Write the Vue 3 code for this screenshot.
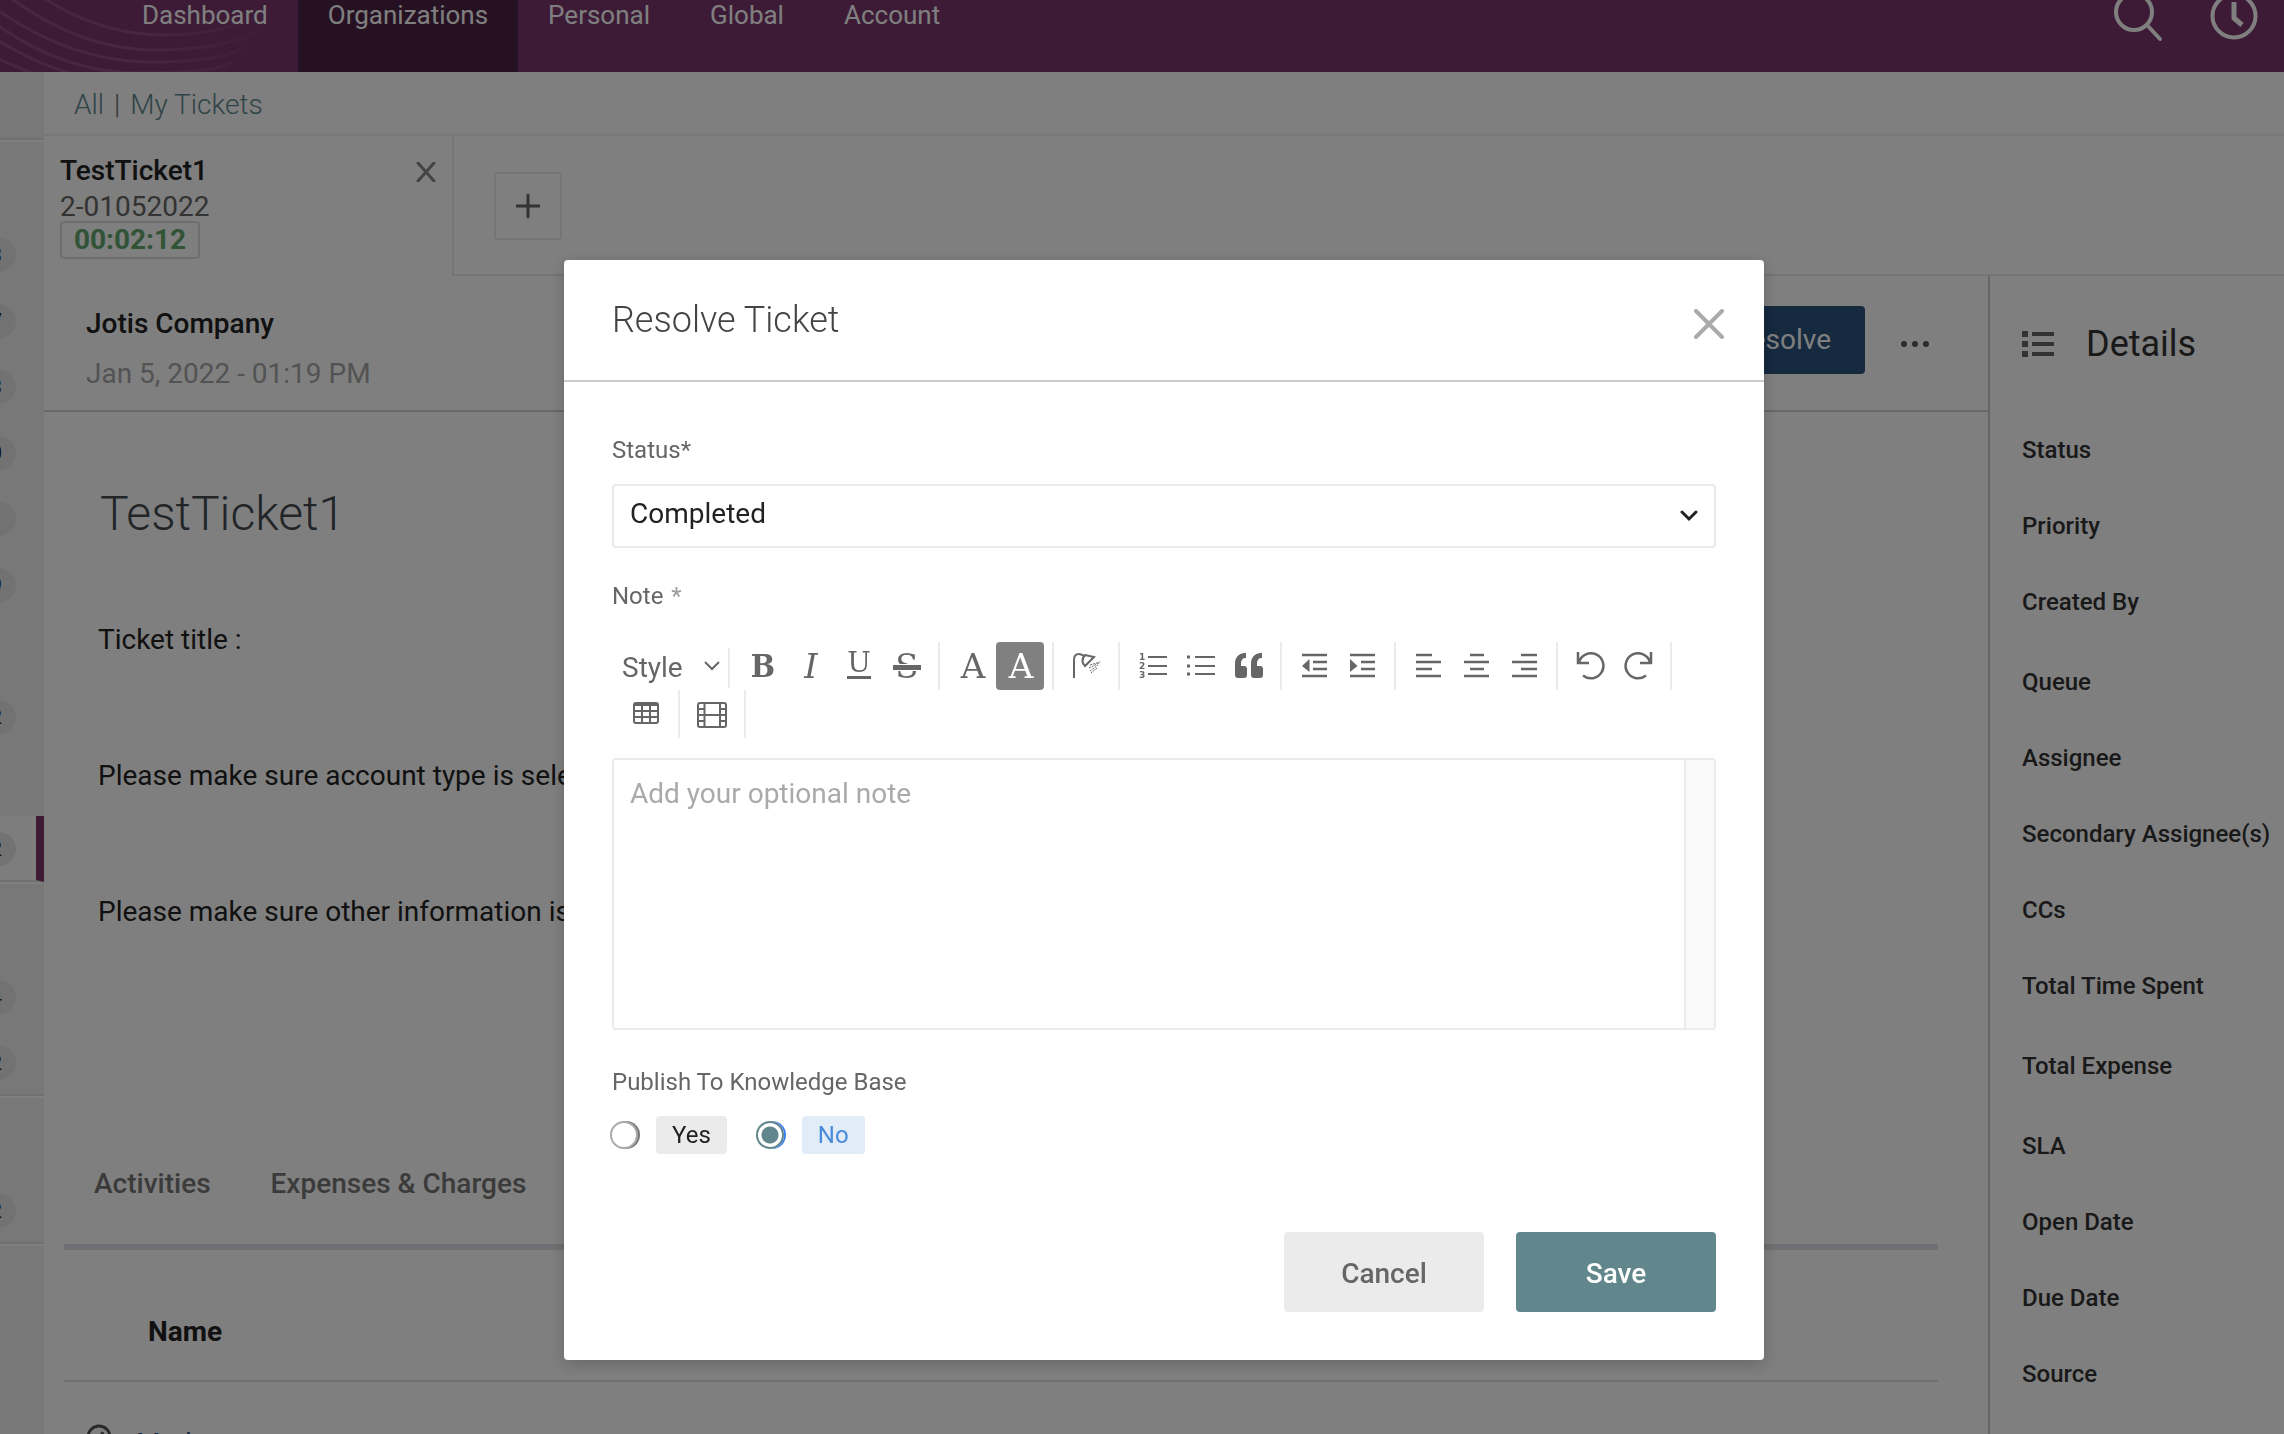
<script setup>
import { ref } from 'vue'

const navItems = ['Dashboard', 'Organizations', 'Personal', 'Global', 'Account']
const activeNav = 'Organizations'

// Queue counters of the collapsed side panel; null is a row without a counter.
const sideSections = [
  [13, 17, 13, 10, 1, 19, null, 12, null, 12],
  [14, 12],
  [12]
]
const activeSide = [0, 9]

const paragraphs = [
  'Ticket title :',
  'Please make sure account type is selected',
  'Please make sure other information is correct'
]

const details = [
  ['Status', 'Priority', 'Created By'],
  ['Queue', 'Assignee', 'Secondary Assignee(s)', 'CCs', 'Total Time Spent'],
  ['Total Expense'],
  ['SLA', 'Open Date', 'Due Date', 'Source']
]

const toolGroups = [
  [
    { label: 'Bold', text: 'B', kind: 'bold' },
    { label: 'Italic', text: 'I', kind: 'italic' },
    { label: 'Underline', text: 'U', kind: 'underline' },
    { label: 'Strikethrough', text: 'S', kind: 'strike' }
  ],
  [
    { label: 'Text colour', text: 'A', kind: 'plain' },
    { label: 'Background colour', text: 'A', kind: 'plain filled' }
  ],
  [{ label: 'Clear formatting', icon: 'clear' }],
  [
    { label: 'Numbered list', icon: 'ol' },
    { label: 'Bulleted list', icon: 'ul' },
    { label: 'Quote', icon: 'quote' }
  ],
  [
    { label: 'Outdent', icon: 'outdent' },
    { label: 'Indent', icon: 'indent' }
  ],
  [
    { label: 'Align left', icon: 'left' },
    { label: 'Align centre', icon: 'center' },
    { label: 'Align right', icon: 'right' }
  ],
  [
    { label: 'Undo', icon: 'undo' },
    { label: 'Redo', icon: 'redo' }
  ],
  [{ label: 'Insert table', icon: 'table' }],
  [{ label: 'Insert video', icon: 'film' }]
]

const icons = {
  clear: {
    width: 2,
    stroke: 'M12 36V18q0-6 5-6q3 0 6 3M23 13l9 2l-9 9q-5-5 0-11z',
    dots: 'M28 23l10-3M27 26l10-5M28 29l8-6M29 31l6-5'
  },
  ol: { width: 2, stroke: 'M20 15h19M20 24h19M20 32h19' },
  ul: { width: 2, stroke: 'M19 15h20M19 24h20M19 32h20', fill: 'M11 13.500h3v3h-3zM11 22.500h3v3h-3zM11 30.500h3v3h-3z' },
  quote: {
    fill: 'M20 24h-3v-3c0-3 2-5 4-5h1v-5h-1c-6 0-10 4-10 11v11c0 2 1 3 3 3h6c2 0 3-1 3-3v-6c0-2-1-3-3-3zM36 24h-3v-3c0-3 2-5 4-5h1v-5h-1c-6 0-10 4-10 11v11c0 2 1 3 3 3h6c2 0 3-1 3-3v-6c0-2-1-3-3-3z'
  },
  outdent: { width: 2.5, stroke: 'M12 13h25M23 20h14M23 27h14M12 34h25', fill: 'M19.500 17v13L12 24z' },
  indent: { width: 2.5, stroke: 'M12 13h25M23 20h14M23 27h14M12 34h25', fill: 'M12 17v13L19.500 24z' },
  left: { width: 2.5, stroke: 'M12 13h16M12 20h25M12 27h16M12 34h25' },
  center: { width: 2.5, stroke: 'M18 13h14M12 20h25M18 27h14M12 34h25' },
  right: { width: 2.5, stroke: 'M21 13h16M12 20h25M21 27h16M12 34h25' },
  undo: { width: 2.5, stroke: 'M12 10v11h11M13 20A12.500 12.500 0 1 1 17 33.500' },
  redo: { width: 2.5, stroke: 'M37 10v11H26M36 20A12.500 12.500 0 1 0 32 33.500' },
  table: {
    width: 2,
    stroke: 'M14 13h20q2 0 2 2v16q0 2-2 2H14q-2 0-2-2V15q0-2 2-2zM12 21h24M12 27h24M20 15v18M28 15v18',
    fill: 'M12 13h24v3H12z'
  },
  film: {
    width: 2,
    stroke: 'M12 13h24q2 0 2 2v20q0 2-2 2H12q-2 0-2-2V15q0-2 2-2zM16.500 13v24M32 13v24M16 25h16M10 19h6M10 25h6M10 31h6M32 19h6M32 25h6M32 31h6'
  }
}

const status = ref('Completed')
const textStyle = ref('Style')
const note = ref('')
const publish = ref('No')
</script>

<template>
  <div class="page">
    <header class="topbar">
      <svg class="waves" viewBox="0 0 280 72" aria-hidden="true">
        <defs>
          <linearGradient id="wave-fade" gradientUnits="userSpaceOnUse" x1="0" y1="0" x2="280" y2="0">
            <stop offset="0" stop-color="#fff" stop-opacity=".12" />
            <stop offset=".5" stop-color="#fff" stop-opacity=".12" />
            <stop offset="1" stop-color="#fff" stop-opacity="0" />
          </linearGradient>
        </defs>
        <g fill="none" stroke="url(#wave-fade)" stroke-width="3">
          <path d="M44 -2Q100 35 165 35T276 6" />
          <path d="M8 -4Q80 50 155 50T262 28" />
          <path d="M-4 9Q72 62 150 62T244 46" />
          <path d="M-4 24Q64 73 140 73T232 62" />
          <path d="M-4 39Q48 72 100 80" />
          <path d="M-4 57Q20 70 44 76" />
        </g>
      </svg>
      <nav class="nav">
        <a v-for="item in navItems" :key="item" href="#" :class="{ active: item === activeNav }">{{ item }}</a>
      </nav>
      <div class="top-actions">
        <button type="button" aria-label="Search">
          <svg width="52" height="52" viewBox="0 0 52 52" fill="none" stroke="#fff" stroke-width="4">
            <circle cx="22" cy="22" r="18" /><path d="M35 35l13 14" stroke-linecap="round" />
          </svg>
        </button>
        <button type="button" aria-label="Timer">
          <svg width="52" height="52" viewBox="0 0 52 52" fill="none" stroke="#fff">
            <circle cx="26" cy="26" r="21.500" stroke-width="4" /><path d="M26 12v16l8 7" stroke-width="5" />
          </svg>
        </button>
      </div>
    </header>

    <div class="shell">
      <aside class="side">
        <div class="side-top"></div>
        <ul v-for="(section, s) in sideSections" :key="s">
          <li v-for="(count, i) in section" :key="i" :class="{ current: s === activeSide[0] && i === activeSide[1] }">
            <span v-if="count !== null" class="badge" :class="{ single: count < 10 }">{{ count }}</span>
          </li>
        </ul>
      </aside>

      <div class="workspace">
        <div class="crumbs">
          <a href="#">All</a><span>|</span><a href="#">My Tickets</a>
        </div>

        <div class="tab-strip">
          <div class="ticket-tab">
            <div>
              <strong>TestTicket1</strong>
              <span class="number">2-01052022</span>
              <span class="timer">00:02:12</span>
            </div>
            <button type="button" class="tab-close" aria-label="Close tab">
              <svg width="20" height="20" viewBox="0 0 20 20" fill="none" stroke="#888" stroke-width="3" stroke-linecap="round"><path d="M2 1l16 18M18 1L2 19" /></svg>
            </button>
          </div>
          <div class="strip-rest">
            <button type="button" class="tab-add" aria-label="New tab">
              <svg width="24" height="24" viewBox="0 0 24 24" stroke="#666" stroke-width="3"><path d="M12 0v24M0 12h24" /></svg>
            </button>
          </div>
        </div>

        <div class="columns">
          <main class="ticket">
            <div class="ticket-head">
              <div>
                <strong>Jotis Company</strong>
                <time>Jan 5, 2022 - 01:19 PM</time>
              </div>
              <div class="ticket-actions">
                <button type="button" class="resolve">Resolve</button>
                <button type="button" class="more" aria-label="More">
                  <svg width="30" height="8" viewBox="0 0 30 8" fill="#555b60"><circle cx="4" cy="4" r="3" /><circle cx="15" cy="4" r="3" /><circle cx="26" cy="4" r="3" /></svg>
                </button>
              </div>
            </div>

            <div class="ticket-body">
              <h1>TestTicket1</h1>
              <p v-for="p in paragraphs" :key="p">{{ p }}</p>
            </div>

            <div class="ticket-lists">
              <div class="list-tabs">
                <a href="#">Activities</a><a href="#">Expenses &amp; Charges</a>
              </div>
              <table>
                <thead><tr><th>Name</th></tr></thead>
                <tbody>
                  <tr>
                    <td>
                      <svg width="26" height="26" viewBox="0 0 26 26" fill="none" stroke="#555" stroke-width="3"><circle cx="13" cy="13" r="11" /><path d="M13 16l4-8" /></svg>
                      <a href="#">Mark</a>
                    </td>
                  </tr>
                </tbody>
              </table>
            </div>
          </main>

          <aside class="details">
            <h2>
              <svg width="32" height="26" viewBox="0 0 32 26" fill="#666"><path d="M0 0h6v6H0zM0 10h6v6H0zM0 20h6v6H0zM10 1h22v4H10zM10 11h22v4H10zM10 21h22v4H10z" /></svg>
              Details
            </h2>
            <ul v-for="(group, g) in details" :key="g">
              <li v-for="field in group" :key="field">{{ field }}</li>
            </ul>
          </aside>
        </div>
      </div>
    </div>

    <div class="overlay">
      <form class="modal" role="dialog" aria-labelledby="dialog-title" @submit.prevent>
        <div class="modal-head">
          <h2 id="dialog-title">Resolve Ticket</h2>
          <button type="button" aria-label="Close">
            <svg width="30" height="30" viewBox="0 0 30 30" fill="none" stroke="#aaa" stroke-width="4" stroke-linecap="round"><path d="M2 2l26 26M28 2L2 28" /></svg>
          </button>
        </div>

        <div class="modal-body">
          <label class="field-label" for="status">Status*</label>
          <div class="select-wrap status-wrap">
            <select id="status" v-model="status"><option>Completed</option></select>
            <svg width="18" height="12" viewBox="0 0 18 12" fill="none" stroke="#222" stroke-width="3" stroke-linecap="round"><path d="M2 2l7 7l7-7" /></svg>
          </div>

          <label class="field-label note-label" for="note">Note <span>*</span></label>
          <div class="toolbar">
            <div class="select-wrap style-wrap">
              <select v-model="textStyle" aria-label="Style"><option>Style</option></select>
              <svg width="16" height="10" viewBox="0 0 16 10" fill="none" stroke="#666" stroke-width="2"><path d="M1 1l7 7l7-7" /></svg>
            </div>
            <div v-for="(group, g) in toolGroups" :key="g" class="tool-group">
              <button v-for="tool in group" :key="tool.label" type="button" :aria-label="tool.label" :class="['tool', tool.kind]">
                <span v-if="tool.text">{{ tool.text }}</span>
                <svg v-else width="48" height="48" viewBox="0 0 48 48" fill="none">
                  <path v-if="icons[tool.icon].fill" :d="icons[tool.icon].fill" fill="#666" />
                  <path v-if="icons[tool.icon].stroke" :d="icons[tool.icon].stroke" stroke="#666" :stroke-width="icons[tool.icon].width" />
                  <path v-if="icons[tool.icon].dots" :d="icons[tool.icon].dots" stroke="#666" stroke-width="1" stroke-dasharray="2 1" />
                  <g v-if="tool.icon === 'ol'" class="ol-digits"><text x="11" y="18">1</text><text x="11" y="27">2</text><text x="11" y="36">3</text></g>
                </svg>
              </button>
            </div>
          </div>
          <div class="editor">
            <textarea id="note" v-model="note" placeholder="Add your optional note"></textarea>
            <div class="gutter"></div>
          </div>

          <fieldset>
            <legend class="field-label">Publish To Knowledge Base</legend>
            <div class="choices">
              <label v-for="choice in ['Yes', 'No']" :key="choice">
                <input v-model="publish" type="radio" name="publish" :value="choice" />
                <span>{{ choice }}</span>
              </label>
            </div>
          </fieldset>

          <div class="modal-actions">
            <button type="button" class="cancel">Cancel</button>
            <button type="submit" class="save">Save</button>
          </div>
        </div>
      </form>
    </div>
  </div>
</template>

<style>
body { background: #fff; }
</style>

<style scoped>
.page, .page * { box-sizing: border-box; }
.page {
  display: flex;
  flex-direction: column;
  height: 100vh;
  overflow: hidden;
  background: #fff;
  color: #222;
  font: 400 28px/40px Roboto, "Liberation Sans", sans-serif;
}
button, select, textarea { font: inherit; color: inherit; margin: 0; padding: 0; border: 0; background: none; }
svg { display: block; }
a { text-decoration: none; }
ul { margin: 0; padding: 0; list-style: none; }
h1, h2, p { margin: 0; }
strong { font-weight: 500; }

.topbar {
  position: relative;
  display: flex;
  flex: none;
  align-items: flex-end;
  justify-content: space-between;
  height: 72px;
  padding: 0 24px 0 112px;
  overflow: hidden;
  background: #7a366e;
}
.waves { position: absolute; left: 0; top: 0; width: 280px; height: 72px; }
.nav { position: relative; display: flex; font-size: 26px; line-height: 114px; }
.nav a { padding: 0 30px; color: #fff; }
.nav a.active { background: #4c2246; }
.top-actions { display: flex; gap: 44px; padding-bottom: 30px; }

.shell { display: flex; flex: 1; min-height: 0; }
.side { flex: none; width: 44px; overflow: hidden; background: #f0f0f0; font-size: 20px; }
.side-top { height: 70px; border-bottom: 2px solid #fff; box-shadow: inset 0 -2px #e0e0e0; }
.side ul { padding-top: 80px; border-bottom: 2px solid #fff; }
.side li { display: flex; justify-content: flex-end; align-items: center; height: 66px; padding-right: 28px; }
.side li:last-child { padding-top: 2px; border-bottom: 2px solid #e0e0e0; }
.side li.current { padding-right: 20px; border-right: 8px solid #7a366e; background: #fafafa; }
.badge {
  flex: none;
  width: 52px;
  height: 34px;
  padding-right: 14px;
  border-radius: 17px;
  background: #e4e4e4;
  line-height: 34px;
  text-align: right;
}
.badge.single { padding-right: 20px; }

.workspace { display: flex; flex: 1; flex-direction: column; min-width: 0; }
.crumbs {
  display: flex;
  gap: 10px;
  height: 64px;
  padding-left: 30px;
  border-bottom: 2px solid #f2f2f2;
  color: #666;
  font-weight: 300;
  line-height: 66px;
}
.crumbs a { color: #60888e; }

.tab-strip { display: flex; height: 140px; }
.ticket-tab {
  display: flex;
  justify-content: space-between;
  width: 410px;
  padding: 17px 16px 0;
  border-right: 2px solid #ebebeb;
  line-height: 36px;
}
.ticket-tab strong, .number { display: block; }
.number { color: #666; }
.timer {
  display: block;
  width: 140px;
  margin-top: -4px;
  border: 2px solid #ddd;
  border-radius: 4px;
  color: #62a76c;
  font-weight: 700;
  line-height: 34px;
  text-align: center;
}
.tab-close { align-self: flex-start; padding-top: 9px; }
.strip-rest { flex: 1; padding: 36px 40px; border-bottom: 2px solid #ebebeb; }
.tab-add { display: grid; place-items: center; width: 68px; height: 68px; border: 2px solid #ebebeb; border-radius: 4px; }

.columns { display: grid; flex: 1; grid-template-columns: 1fr 296px; min-height: 0; }
.ticket-head {
  display: flex;
  justify-content: space-between;
  height: 136px;
  padding: 23px 58px 0 42px;
  border-bottom: 2px solid #d2d2d2;
  line-height: 50px;
}
.ticket-head strong, .ticket-head time { display: block; }
.ticket-head time { color: #a6a6a6; }
.ticket-actions { display: flex; align-items: center; gap: 35px; height: 68px; margin-top: 7px; }
.more { padding-top: 8px; }
.resolve { height: 68px; padding: 0 34px; border-radius: 4px; background: #2b547f; color: #fff; }
.ticket-body { padding: 72px 54px 0; }
h1 { padding-left: 2px; color: #444b50; font-size: 48px; font-weight: 300; line-height: 60px; margin-bottom: 76px; }
.ticket-body p + p { margin-top: 96px; }
.ticket-lists { padding: 232px 50px 0 20px; }
.list-tabs { display: flex; gap: 60px; padding: 0 30px 40px; border-bottom: 6px solid #dfe1e6; }
.list-tabs a { color: #777; font-weight: 500; }
table { width: 100%; border-collapse: collapse; }
th { padding: 62px 84px 28px; border-bottom: 2px solid #dedede; font-weight: 700; text-align: left; }
td { padding: 42px 22px; }
td svg, td a { display: inline-block; vertical-align: top; }
td svg { margin-right: 24px; }
td a { color: #2b547f; }

.details { padding: 40px 0 0 32px; border-left: 2px solid #ccc; color: #333; font-size: 24px; font-weight: 500; white-space: nowrap; }
.details h2 { display: flex; align-items: center; gap: 32px; height: 56px; font-size: 36px; font-weight: 400; margin-bottom: 40px; }
.details li { line-height: 76px; }
.details ul + ul { margin-top: 4px; }

.overlay {
  position: fixed;
  inset: 0;
  display: flex;
  justify-content: center;
  align-items: flex-start;
  padding: 260px 0 0 44px;
  background: rgba(0, 0, 0, .5);
}
.modal { width: 1200px; max-width: 100%; border-radius: 4px; background: #fff; box-shadow: 0 4px 16px rgba(0, 0, 0, .2); }
.modal-head {
  display: flex;
  align-items: center;
  justify-content: space-between;
  height: 122px;
  padding: 0 40px 0 48px;
  border-bottom: 2px solid #ccc;
}
.modal-head h2 { color: #444; font-size: 36px; font-weight: 300; }
.modal-head button { padding-top: 8px; }
.modal-body { padding: 54px 48px 48px; }
.field-label { display: block; padding: 0; color: #666; font-size: 24px; line-height: 28px; }
.select-wrap { position: relative; }
.select-wrap select { width: 100%; appearance: none; cursor: pointer; }
.select-wrap svg { position: absolute; top: 50%; right: 18px; margin-top: -6px; pointer-events: none; }
.status-wrap { margin: 20px 0 34px; }
.status-wrap select { display: block; height: 64px; padding: 0 16px 4px; border: 2px solid #ebebeb; border-radius: 4px; }
.note-label span { padding-left: 2px; color: #999; }

.toolbar { display: flex; flex-wrap: wrap; margin-top: 32px; padding-left: 2px; color: #666; }
.style-wrap { width: 116px; height: 40px; margin-top: 6px; border-right: 2px solid #ebebeb; }
.style-wrap select { height: 38px; padding: 0 8px; }
.style-wrap svg { right: 8px; margin-top: -7px; }
.tool-group { display: flex; padding: 0 8px; border-right: 2px solid #ebebeb; }
.tool {
  position: relative;
  display: grid;
  place-items: center;
  width: 48px;
  height: 48px;
  padding-left: 2px;
  border-radius: 4px;
  font-family: "DejaVu Serif", serif;
  font-size: 34px;
  line-height: 48px;
}
.tool svg { margin-left: -2px; }
.tool span { display: block; }
.bold { font-family: "DejaVu Serif Condensed", "DejaVu Serif", serif; font-weight: 700; font-size: 32px; }
.italic { font-style: italic; }
.underline { font-size: 28px; line-height: 42px; place-items: start center; }
.underline::after { content: ""; position: absolute; left: 13px; right: 11px; bottom: 11px; height: 3px; background: #666; }
.strike::after { content: ""; position: absolute; left: 11px; right: 9px; top: 22px; height: 5px; border: solid #fff; border-width: 1px 0; background: #666; }
.filled { background: #808080; color: #fff; }
.ol-digits { fill: #666; font: 700 9px "DejaVu Sans", sans-serif; }

.editor { display: flex; height: 272px; margin: 20px 0 38px; border: 2px solid #ebebeb; border-radius: 4px; }
.editor textarea { flex: 1; padding: 14px 16px; resize: none; outline: 0; color: #222; }
.editor textarea::placeholder { color: #aaa; opacity: 1; }
.gutter { width: 30px; border-left: 2px solid #ebebeb; background: #fafafa; }

fieldset { margin: 0; padding: 0; border: 0; }
.choices { display: flex; gap: 29px; margin: 20px 0 78px -2px; }
.choices label { display: flex; align-items: center; gap: 18px; font-size: 24px; line-height: 38px; }
.choices input {
  appearance: none;
  width: 28px;
  height: 28px;
  margin: 0;
  border: 2px solid #aaa;
  border-radius: 50%;
  background: #fff;
  box-shadow: 2px 0 #777;
}
.choices input:checked {
  border-color: #61878d;
  background: radial-gradient(circle, #61878d 8px, #fff 9px);
  box-shadow: 2px 0 #3b7ff5;
}
.choices span { padding: 0 16px; border-radius: 4px; background: #ebebeb; }
.choices input:checked + span { background: #e2ecf8; color: #4a8bdb; }
.modal-actions { display: flex; justify-content: flex-end; gap: 32px; }
.modal-actions button { width: 200px; height: 80px; padding-top: 4px; border-radius: 4px; font-weight: 500; }
.cancel { background: #ebebeb; color: #666; }
.save { background: #61878d; color: #fff; font-weight: 700; }
</style>
